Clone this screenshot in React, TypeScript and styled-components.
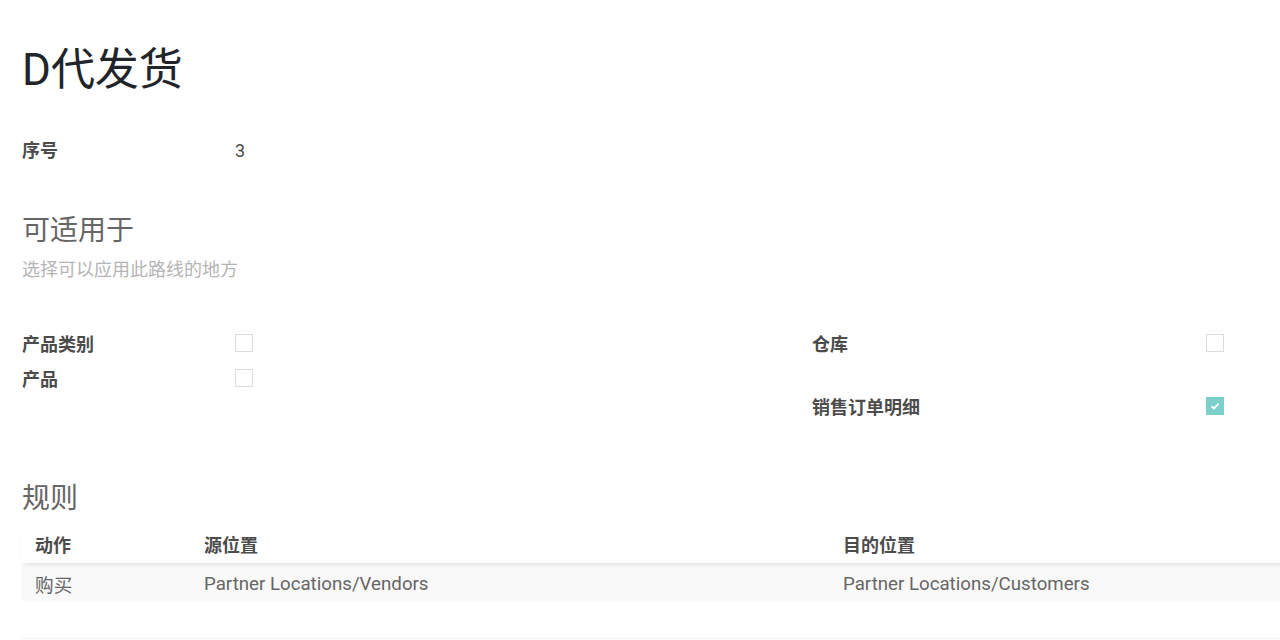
import styled, { createGlobalStyle } from "styled-components";

const GlobalStyle = createGlobalStyle`
  html, body {
    margin: 0;
    padding: 0;
    background: #ffffff;
    overflow: hidden;
  }
  body {
    font-family: Roboto, "Noto Sans CJK SC", sans-serif;
    color: #4c4c4c;
  }
`;

const Sheet = styled.div`
  width: 1600px;
  padding: 40px 0 0 22px;
  box-sizing: border-box;
`;

const Title = styled.h1`
  margin: 0;
  font-size: 44px;
  font-weight: 400;
  line-height: 60px;
  color: #212529;
`;

const FieldRow = styled.div`
  display: grid;
  grid-template-columns: 213px 1fr;
  align-items: center;
  margin-top: 38px;
  font-size: 18px;
  line-height: 26px;
`;

const Label = styled.span`
  font-weight: 700;
  color: #4c4c4c;
`;

const Value = styled.span`
  color: #4c4c4c;
`;

const SectionTitle = styled.h2<{ $top: number }>`
  margin: ${(p) => p.$top}px 0 0;
  font-size: 28px;
  font-weight: 400;
  line-height: 36px;
  color: #666666;
`;

const Hint = styled.p`
  margin: 8px 0 0;
  font-size: 18px;
  line-height: 26px;
  color: #b5b5b5;
`;

const Groups = styled.div`
  display: grid;
  grid-template-columns: 790px 1fr;
  margin-top: 47px;
`;

const Group = styled.div`
  display: flex;
  flex-direction: column;
`;

const CheckRow = styled.div<{ $labelWidth: number; $gap: number }>`
  display: grid;
  grid-template-columns: ${(p) => p.$labelWidth}px 18px;
  align-items: center;
  height: 26px;
  margin-bottom: ${(p) => p.$gap}px;
  font-size: 18px;
`;

const Box = styled.span<{ $checked?: boolean }>`
  width: 18px;
  height: 18px;
  box-sizing: border-box;
  border: ${(p) => (p.$checked ? "none" : "1px solid #dcdcdc")};
  background: ${(p) => (p.$checked ? "#7dcfcb" : "#ffffff")};
  display: flex;
  align-items: center;
  justify-content: center;
`;

const Table = styled.table`
  margin-top: 8px;
  margin-left: -1px;
  width: 1580px;
  border-collapse: collapse;
  font-size: 18.7px;
`;

const HeadCell = styled.th<{ $width?: number }>`
  text-align: left;
  font-weight: 700;
  font-size: 18px;
  color: #4c4c4c;
  padding: 6px 14px 6px 14px;
  height: 26px;
  width: ${(p) => (p.$width ? `${p.$width}px` : "auto")};
`;

const HeadRow = styled.tr`
  box-shadow: 0 4px 5px -3px rgba(0, 0, 0, 0.12);
  position: relative;
`;

const BodyRow = styled.tr`
  background: #f9f9f9;
`;

const Cell = styled.td`
  padding: 7px 14px 4px 14px;
  height: 26px;
  color: #666666;
`;

const Footer = styled.div`
  margin-top: 37px;
  margin-left: -1px;
  height: 1px;
  background: #f3f3f3;
`;

const Check = () => (
  <svg width="10" height="8" viewBox="0 0 10 8">
    <path d="M1.5 4.2 L4 6.4 L8.6 1.6" fill="none" stroke="#ffffff" strokeWidth="1.8" />
  </svg>
);

export default function App() {
  return (
    <>
      <GlobalStyle />
      <Sheet>
        <Title>D代发货</Title>

        <FieldRow>
          <Label>序号</Label>
          <Value>3</Value>
        </FieldRow>

        <SectionTitle $top={49}>可适用于</SectionTitle>
        <Hint>选择可以应用此路线的地方</Hint>

        <Groups>
          <Group>
            <CheckRow $labelWidth={213} $gap={9}>
              <Label>产品类别</Label>
              <Box />
            </CheckRow>
            <CheckRow $labelWidth={213} $gap={0}>
              <Label>产品</Label>
              <Box />
            </CheckRow>
          </Group>
          <Group>
            <CheckRow $labelWidth={394} $gap={37}>
              <Label>仓库</Label>
              <Box />
            </CheckRow>
            <CheckRow $labelWidth={394} $gap={0}>
              <Label>销售订单明细</Label>
              <Box $checked>
                <Check />
              </Box>
            </CheckRow>
          </Group>
        </Groups>

        <SectionTitle $top={62}>规则</SectionTitle>

        <Table>
          <thead>
            <HeadRow>
              <HeadCell $width={141}>动作</HeadCell>
              <HeadCell $width={611}>源位置</HeadCell>
              <HeadCell>目的位置</HeadCell>
            </HeadRow>
          </thead>
          <tbody>
            <BodyRow>
              <Cell>购买</Cell>
              <Cell>Partner Locations/Vendors</Cell>
              <Cell>Partner Locations/Customers</Cell>
            </BodyRow>
          </tbody>
        </Table>

        <Footer />
      </Sheet>
    </>
  );
}
